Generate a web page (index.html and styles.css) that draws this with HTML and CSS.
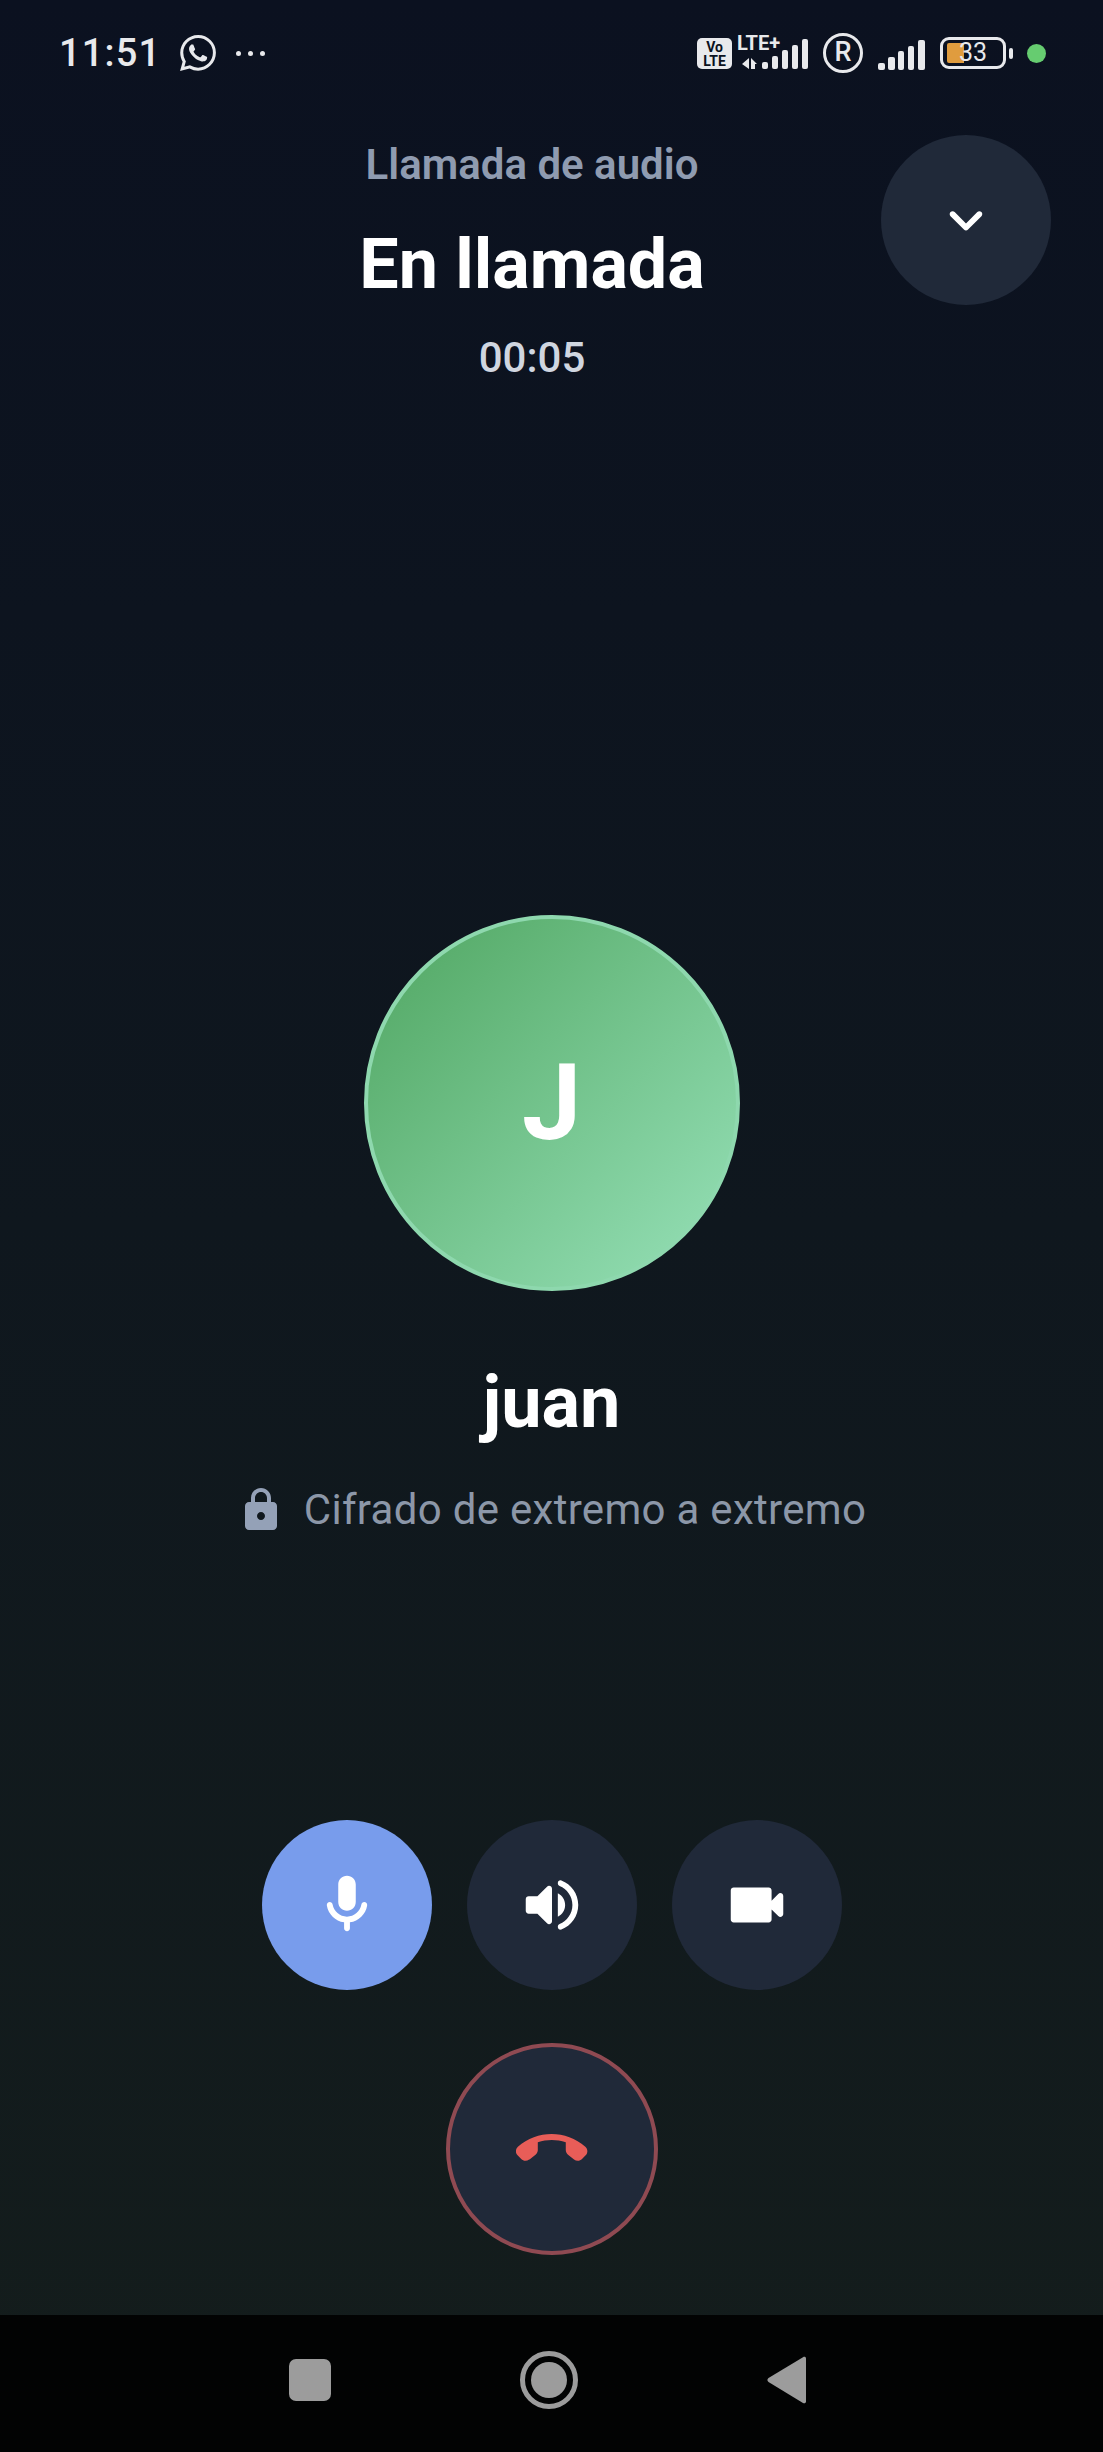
FILE: index.html
```html
<!DOCTYPE html>
<html lang="es">
  <head>
    <meta charset="utf-8">
    <title>En llamada</title>
    <link rel="stylesheet" href="styles.css">
  </head>

  <body>
    <div class="screen">
      <div class="status">
        <div class="status-left">
          <span class="clock">11:51</span>
          <svg class="wa" viewBox="0 0 24 24"><path d="M17.472 14.382c-.297-.149-1.758-.867-2.03-.967-.273-.099-.471-.148-.67.15-.197.297-.767.966-.94 1.164-.173.199-.347.223-.644.075-.297-.15-1.255-.463-2.39-1.475-.883-.788-1.48-1.761-1.653-2.059-.173-.297-.018-.458.13-.606.134-.133.298-.347.446-.52.149-.174.198-.298.298-.497.099-.198.05-.371-.025-.52-.075-.149-.669-1.612-.916-2.207-.242-.579-.487-.5-.669-.51-.173-.008-.371-.01-.57-.01-.198 0-.52.074-.792.372-.272.297-1.04 1.016-1.04 2.479 0 1.462 1.065 2.875 1.213 3.074.149.198 2.096 3.2 5.077 4.487.709.306 1.262.489 1.694.625.712.227 1.36.195 1.871.118.571-.085 1.758-.719 2.006-1.413.248-.694.248-1.289.173-1.413-.074-.124-.272-.198-.57-.347m-5.421 7.403h-.004a9.87 9.87 0 01-5.031-1.378l-.361-.214-3.741.982.998-3.648-.235-.374a9.86 9.86 0 01-1.51-5.26c.001-5.45 4.436-9.884 9.888-9.884 2.64 0 5.122 1.03 6.988 2.898a9.825 9.825 0 012.893 6.994c-.003 5.45-4.437 9.884-9.885 9.884m8.413-18.297A11.815 11.815 0 0012.05 0C5.495 0 .16 5.335.157 11.892c0 2.096.547 4.142 1.588 5.945L.057 24l6.305-1.654a11.882 11.882 0 005.683 1.448h.005c6.554 0 11.89-5.335 11.893-11.893a11.821 11.821 0 00-3.48-8.413z"/></svg>
          <div class="dots"><i></i><i></i><i></i></div>
        </div>
        <div class="status-right">
          <div class="volte">Vo<br>LTE</div>
          <div class="lte">
            <span class="lte-label">LTE+</span>
            <svg class="signal-lte" viewBox="0 0 72 34">
              <path d="M5 28l7-6v11zM14 22l6 6h-2v5h-4z"/>
              <rect x="25" y="26" width="6" height="7" rx="2"/>
              <rect x="35" y="20" width="6" height="13" rx="2"/>
              <rect x="45" y="14" width="6" height="19" rx="2"/>
              <rect x="55" y="9" width="6" height="24" rx="2"/>
              <rect x="65" y="3" width="6" height="30" rx="2"/>
            </svg>
          </div>
          <div class="roaming">R</div>
          <svg class="signal" viewBox="0 0 47 30">
            <rect x="0" y="23" width="7" height="7" rx="2"/>
            <rect x="10" y="17" width="7" height="13" rx="2"/>
            <rect x="20" y="11" width="6" height="19" rx="2"/>
            <rect x="30" y="6" width="6" height="24" rx="2"/>
            <rect x="40" y="0" width="7" height="30" rx="2"/>
          </svg>
          <div class="battery">
            <div class="battery-body"><span class="battery-fill"></span><span class="battery-num">33</span></div>
            <span class="battery-tip"></span>
          </div>
          <span class="green-dot"></span>
        </div>
      </div>

      <div class="header">
        <div class="call-type">Llamada de audio</div>
        <div class="call-state">En llamada</div>
        <div class="call-time">00:05</div>
        <button class="btn minimize">
          <svg viewBox="0 0 24 24"><path d="M8.12 9.29L12 13.17l3.88-3.88c.39-.39 1.02-.39 1.41 0 .39.39.39 1.02 0 1.41l-4.59 4.59c-.39.39-1.02.39-1.41 0L6.7 10.7c-.39-.39-.39-1.02 0-1.41.39-.38 1.03-.39 1.42 0z"/></svg>
        </button>
      </div>

      <div class="callee">
        <div class="avatar">J</div>
        <div class="name">juan</div>
        <div class="secure">
          <svg class="lock" viewBox="0 0 24 24"><path d="M18 8h-1V6c0-2.76-2.24-5-5-5S7 3.24 7 6v2H6c-1.1 0-2 .9-2 2v10c0 1.1.9 2 2 2h12c1.1 0 2-.9 2-2V10c0-1.1-.9-2-2-2zm-6 9c-1.1 0-2-.9-2-2s.9-2 2-2 2 .9 2 2-.9 2-2 2zM9 8V6c0-1.66 1.34-3 3-3s3 1.34 3 3v2H9z"/></svg>
          <span>Cifrado de extremo a extremo</span>
        </div>
      </div>

      <div class="controls">
        <div class="row">
          <button class="btn active">
            <svg viewBox="0 0 24 24"><path d="M12 14c1.66 0 3-1.34 3-3V5c0-1.66-1.34-3-3-3S9 3.34 9 5v6c0 1.66 1.34 3 3 3zm5.91-3c-.49 0-.9.36-.98.85C16.52 14.2 14.47 16 12 16s-4.52-1.8-4.93-4.15c-.08-.49-.49-.85-.98-.85-.61 0-1.09.54-1 1.14.49 3 2.89 5.35 5.91 5.78V20c0 .55.45 1 1 1s1-.45 1-1v-2.08c3.02-.43 5.42-2.78 5.91-5.78.1-.6-.39-1.14-1-1.14z"/></svg>
          </button>
          <button class="btn">
            <svg viewBox="0 0 24 24"><path d="M3 10v4c0 .55.45 1 1 1h3l3.29 3.29c.63.63 1.71.18 1.71-.71V6.41c0-.89-1.08-1.34-1.71-.71L7 9H4c-.55 0-1 .45-1 1zm13.5 2c0-1.77-1.02-3.29-2.5-4.03v8.05c1.48-.73 2.5-2.25 2.5-4.02zM14 4.45v.2c0 .38.25.71.6.85C17.18 6.53 19 9.06 19 12s-1.82 5.47-4.4 6.5c-.36.14-.6.47-.6.85v.2c0 .63.63 1.07 1.21.85C18.6 19.11 21 15.84 21 12s-2.4-7.11-5.79-8.4c-.58-.23-1.21.22-1.21.85z"/></svg>
          </button>
          <button class="btn">
            <svg viewBox="0 0 24 24"><path d="M17 10.5V7c0-.55-.45-1-1-1H4c-.55 0-1 .45-1 1v10c0 .55.45 1 1 1h12c.55 0 1-.45 1-1v-3.5l2.29 2.29c.63.63 1.71.18 1.71-.71V8.91c0-.89-1.08-1.34-1.71-.71L17 10.5z"/></svg>
          </button>
        </div>
        <button class="btn hangup">
          <svg viewBox="0 0 24 24"><path d="M4.51 15.48l2-1.59c.48-.38.76-.96.76-1.57v-2.6c3.02-.98 6.29-.99 9.32 0v2.61c0 .61.28 1.19.76 1.57l1.99 1.58c.8.63 1.94.57 2.66-.15l1.22-1.22c.8-.8.74-2.13-.11-2.88-6.41-5.66-16.07-5.66-22.48 0-.85.75-.91 2.08-.11 2.88l1.22 1.22c.71.72 1.85.78 2.65.15z"/></svg>
        </button>
      </div>

      <div class="navbar">
        <span class="nav-square"></span>
        <span class="nav-home"></span>
        <svg class="nav-back" viewBox="0 0 39 48"><path d="M36 1.2L1.5 22c-1.5 1-1.5 3 0 4L36 47c1.5.8 3 0 3-1.5V2.5C39 1 37.5.4 36 1.2z"/></svg>
      </div>
    </div>
  </body>
</html>
```

FILE: styles.css
```css
* {
  box-sizing: border-box;
}

body {
  margin: 0;
  font-family: "Roboto", "Liberation Sans", sans-serif;
  background: #000;
}

.screen {
  width: 1103px;
  height: 2452px;
  display: flex;
  flex-direction: column;
  position: relative;
  overflow: hidden;
  background: linear-gradient(180deg, #0b1120 0%, #0f171e 50%, #141d1c 100%);
}

/* status bar */
.status {
  height: 106px;
  padding: 0 57px 0 59px;
  display: flex;
  justify-content: space-between;
  align-items: center;
  color: #e8e9ec;
}

.status-left, .status-right {
  display: flex;
  align-items: center;
}

.clock {
  font-size: 38px;
  font-weight: 500;
  letter-spacing: 1.2px;
}

.wa {
  width: 36px;
  height: 36px;
  margin-left: 19px;
  fill: #e8e9ec;
}

.dots {
  display: flex;
  gap: 7px;
  margin-left: 20px;
}

.dots i {
  width: 5px;
  height: 5px;
  border-radius: 50%;
  background: #e8e9ec;
}

.volte {
  width: 35px;
  height: 31px;
  border-radius: 5px;
  background: #e8e9ec;
  color: #0b1120;
  font-size: 14px;
  font-weight: 700;
  line-height: 14px;
  text-align: center;
  padding-top: 2px;
}

.lte {
  width: 72px;
  height: 34px;
  margin-left: 5px;
  position: relative;
}

.lte-label {
  position: absolute;
  left: 0;
  top: -3px;
  font-size: 20px;
  font-weight: 700;
  line-height: 20px;
}

.signal-lte {
  display: block;
  width: 72px;
  height: 34px;
  fill: #e8e9ec;
}

.roaming {
  width: 40px;
  height: 40px;
  margin-left: 14px;
  border: 3.5px solid #e8e9ec;
  border-radius: 50%;
  font-size: 27px;
  font-weight: 500;
  line-height: 33px;
  text-align: center;
}

.signal {
  width: 47px;
  height: 30px;
  margin: 4px 0 0 15px;
  fill: #e8e9ec;
}

.battery {
  display: flex;
  align-items: center;
  margin-left: 15px;
}

.battery-body {
  width: 66px;
  height: 32px;
  border: 3px solid #e8e9ec;
  border-radius: 9px;
  position: relative;
  text-align: center;
  font-size: 25px;
  line-height: 26px;
}

.battery-fill {
  position: absolute;
  left: 4px;
  top: 3px;
  bottom: 3px;
  width: 17px;
  border-radius: 2px 0 0 2px;
  background: #e09c3e;
}

.battery-num {
  position: relative;
}

.battery-tip {
  width: 4px;
  height: 11px;
  margin-left: 3px;
  border-radius: 2px;
  background: #e8e9ec;
}

.green-dot {
  width: 19px;
  height: 19px;
  margin-left: 14px;
  border-radius: 50%;
  background: #66cc70;
}

/* header */
.header {
  padding: 37px 39px 0 0;
  text-align: center;
}

.call-type {
  font-size: 42px;
  font-weight: 600;
  line-height: 44px;
  color: #8f9bb0;
}

.call-state {
  margin-top: 39px;
  font-size: 70px;
  font-weight: 700;
  line-height: 76px;
  color: #fff;
}

.call-time {
  margin-top: 34px;
  font-size: 42px;
  font-weight: 500;
  line-height: 44px;
  color: #d0d6e0;
}

.btn {
  width: 170px;
  height: 170px;
  padding: 0;
  border: 0;
  border-radius: 50%;
  background: #202939;
  display: flex;
  align-items: center;
  justify-content: center;
}

.btn svg {
  width: 70px;
  height: 70px;
  fill: #fff;
}

.minimize {
  position: absolute;
  top: 135px;
  right: 52px;
}

/* avatar + name */
.callee {
  margin-top: 535px;
  display: flex;
  flex-direction: column;
  align-items: center;
}

.avatar {
  width: 376px;
  height: 376px;
  border-radius: 50%;
  border: 4px solid #8ed8ae;
  background: linear-gradient(135deg, #4fa560 0%, #98e2ba 100%);
  background-origin: border-box;
  color: #fff;
  font-size: 106px;
  font-weight: 700;
  line-height: 368px;
  text-align: center;
}

.name {
  margin-top: 70px;
  font-size: 72px;
  font-weight: 700;
  line-height: 84px;
  color: #fff;
}

.secure {
  margin-top: 41px;
  display: flex;
  align-items: center;
  gap: 19px;
  font-size: 42px;
  line-height: 48px;
  letter-spacing: 0.3px;
  color: #8c97a8;
}

.lock {
  width: 48px;
  height: 48px;
  fill: #94a1b7;
}

/* call buttons */
.controls {
  margin-top: 286px;
  display: flex;
  flex-direction: column;
  align-items: center;
  gap: 53px;
}

.row {
  display: flex;
  gap: 35px;
}

.active {
  background: #789cec;
}

.hangup {
  width: 212px;
  height: 212px;
  border: 4px solid #8f4a52;
}

.hangup svg {
  width: 72px;
  height: 72px;
  fill: #e85d58;
}

/* android nav */
.navbar {
  margin-top: auto;
  height: 137px;
  padding: 0 8px 7px 0;
  background: #020303;
  display: flex;
  align-items: center;
  justify-content: center;
  gap: 189px;
}

.nav-square {
  width: 42px;
  height: 42px;
  border-radius: 7px;
  background: #9c9c9c;
}

.nav-home {
  width: 58px;
  height: 58px;
  border-radius: 50%;
  border: 5px solid #9c9c9c;
  background: #9c9c9c;
  background-clip: content-box;
  padding: 6px;
}

.nav-back {
  width: 39px;
  height: 48px;
  fill: #9c9c9c;
}
```
